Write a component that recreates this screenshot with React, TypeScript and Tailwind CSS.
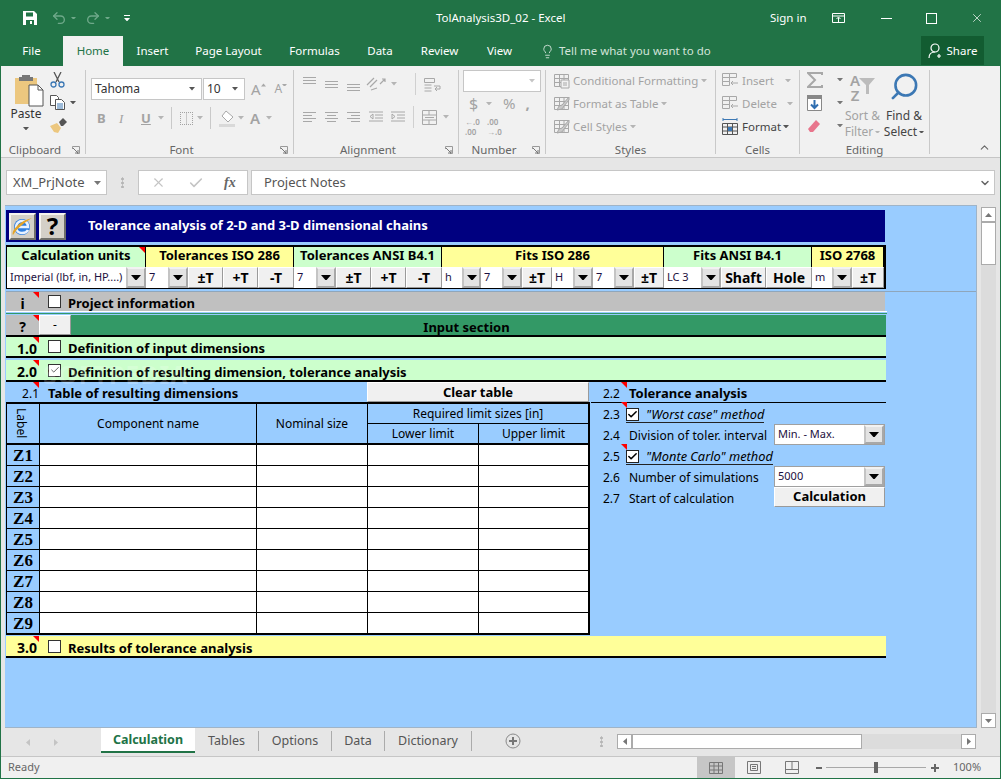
import { Lightbulb, Search, X, Check, ChevronUp, ChevronDown, Undo2, Redo2 } from "lucide-react";
import type { ReactNode } from "react";

const DIS = "#a8a8a8";

const Caret = ({ color = "#7a7a7a", w = 7 }: { color?: string; w?: number }) => (
  <svg width={w} height={(w * 4) / 7} viewBox="0 0 7 4" className="shrink-0">
    <path d="M0 0h7L3.5 4z" fill={color} />
  </svg>
);

const Launcher = () => (
  <svg width="8" height="8" viewBox="0 0 8 8" className="shrink-0">
    <path d="M.5 3V.5h7v7H5" fill="none" stroke="#9a9a9a" />
    <path d="M1 2l5 5M6 4v3H3" fill="none" stroke="#777" />
  </svg>
);

// horizontal text-align style lines
const Lines = ({ rows, color = DIS }: { rows: number[][]; color?: string }) => (
  <svg width="15" height="14" viewBox="0 0 15 14" className="shrink-0">
    {rows.map((r, i) => (
      <path key={i} d={`M${r[0]} ${r[2]}.5H${r[1]}`} stroke={color} />
    ))}
  </svg>
);

const CellGrid = () => (
  <svg width="17" height="16" viewBox="0 0 17 16" className="shrink-0">
    <path d="M.5.5h7v4h-7zM.5 4.5h7v4h-7zM.5 8.5h7v4h-7zM7.5.5h7v4h-7z" fill="none" stroke={DIS} />
    <path d="M9 10h7M11 8l-2 2 2 2" fill="none" stroke={DIS} />
  </svg>
);

const StyleIcon = ({ kind }: { kind: number }) => (
  <svg width="16" height="16" viewBox="0 0 16 16" className="shrink-0">
    <path d="M.5 1.5h14v12H.5zM.5 5.5h14M.5 9.5h14M5.5 1.5v12M10 1.5v12" fill="none" stroke={DIS} />
    {kind === 0 && <path d="M7 7h8v8H7z" fill="#f1f1f1" stroke={DIS} />}
    {kind === 0 && <path d="M9 10h4M9 12h4" stroke={DIS} />}
    {kind > 0 && <path d="M15 1L8 9l-3 1-2 4 5-1 2-3 5-6z" fill="#c9c9c9" stroke={DIS} />}
  </svg>
);

const Group = ({ w, label, launcher, children }: { w: number; label: string; launcher?: boolean; children: ReactNode }) => (
  <div className="flex flex-col h-[84px] border-r border-[#c9c9c9] shrink-0" style={{ width: w }}>
    <div className="h-[72px] flex shrink-0">{children}</div>
    <div className={`h-[14px] mt-px flex items-center justify-center relative text-[11.5px] text-[#666] shrink-0 ${launcher ? "pr-[16px]" : ""}`}>
      {label}
      {launcher && (
        <span className="absolute right-[5px] top-[3px]">
          <Launcher />
        </span>
      )}
    </div>
  </div>
);

const RibbonRow = ({ icon, label, dark, gap = 5 }: { icon: ReactNode; label: string; dark?: boolean; gap?: number }) => (
  <div className={`h-[23px] flex items-center ${dark ? "text-[#444]" : "text-[#a3a3a3]"}`}>
    {icon}
    <span className="ml-[3px] text-[11.5px] whitespace-nowrap">{label}</span>
    <span className="flex" style={{ marginLeft: gap }}>
      <Caret color={dark ? "#555" : "#b5b5b5"} w={6} />
    </span>
  </div>
);

const Clipboard = () => (
  <Group w={85} label="Clipboard" launcher>
    <div className="w-[49px] flex flex-col items-center pl-[7px] pt-[3px]">
      <svg width="30" height="34" viewBox="0 0 30 34" className="shrink-0">
        <path d="M1 5h22v26H1z" fill="#ecc77f" />
        <path d="M8 2h8v2h3v4H5V4h3z" fill="#777" />
        <path d="M15 12h9l5 5v16H15z" fill="#fff" stroke="#555" />
        <path d="M24 12v5h5" fill="none" stroke="#555" />
      </svg>
      <span className="text-[12px] text-[#333] leading-[14px] -ml-[6px]">Paste</span>
      <span className="mt-[6px] -ml-[6px]"><Caret color="#555" w={6} /></span>
    </div>
    <div className="flex flex-col -mt-[2px]">
      <div className="h-[23px] flex items-center">
        <svg width="15" height="16" viewBox="0 0 15 16">
          <path d="M4 0l5 10M11 0L6 10" fill="none" stroke="#555" strokeWidth="1.300" />
          <circle cx="3.500" cy="12.500" r="2.500" fill="none" stroke="#3c78b4" strokeWidth="1.300" />
          <circle cx="11.500" cy="12.500" r="2.500" fill="none" stroke="#3c78b4" strokeWidth="1.300" />
        </svg>
      </div>
      <div className="h-[23px] flex items-center">
        <svg width="16" height="15" viewBox="0 0 16 15">
          <path d="M.5.5h6l2 2v8h-8z" fill="#fff" stroke="#555" />
          <path d="M5.5 4.5h6l3 3v7h-9z" fill="#fff" stroke="#555" />
          <path d="M7 9h6M7 11h6M7 13h6" stroke="#3c78b4" />
        </svg>
        <span className="ml-[4px]"><Caret color="#555" w={6} /></span>
      </div>
      <div className="h-[23px] flex items-center">
        <svg width="17" height="15" viewBox="0 0 17 15">
          <path d="M0 8l7-3 4 5-3 5-4-1z" fill="#ecc77f" />
          <path d="M9 4l4-4 4 4-4 4-2 0z" fill="#555" />
        </svg>
      </div>
    </div>
  </Group>
);

const Combo = ({ w, value, h = 22 }: { w: number; value: string; h?: number }) => (
  <div className="bg-white border border-[#c6c6c6] flex items-center justify-between pl-[3px] pr-[6px] text-[#333] text-[12px]" style={{ width: w, height: h }}>
    <span>{value}</span>
    <Caret color="#555" w={6} />
  </div>
);

const FontGroup = () => (
  <Group w={208} label="Font" launcher>
    <div className="flex flex-col pl-[5px] pt-[8px]">
      <div className="flex items-center h-[22px]">
        <Combo w={111} value="Tahoma" />
        <div className="ml-[1px]"><Combo w={42} value="10" /></div>
        <span className="ml-[6px] text-[15px] text-[#a3a3a3] leading-none">A</span>
        <svg width="5" height="4" viewBox="0 0 7 4" className="mb-[8px]"><path d="M0 4h7L3.5 0z" fill={DIS} /></svg>
        <span className="ml-[9px] text-[12px] text-[#a3a3a3] leading-none">A</span>
        <span className="mb-[8px]"><Caret color={DIS} w={5} /></span>
      </div>
      <div className="flex items-center h-[22px] mt-[7px] text-[#a3a3a3]">
        <span className="ml-[6px] w-[11px] text-[13px] font-bold leading-none">B</span>
        <span className="ml-[11px] w-[11px] text-[13px] italic font-['Liberation_Serif'] leading-none">I</span>
        <span className="ml-[11px] w-[11px] text-[13px] font-bold underline leading-none">U</span>
        <span className="ml-[6px]"><Caret color="#b5b5b5" w={6} /></span>
        <span className="ml-[7px] w-px h-[22px] bg-[#c9c9c9]" />
        <span className="ml-[8px] size-[13px] border border-dotted border-[#a3a3a3] bg-[linear-gradient(#c8c8c8,#c8c8c8)] bg-[length:1px_100%] bg-center bg-no-repeat" />
        <span className="ml-[4px]"><Caret color="#b5b5b5" w={6} /></span>
        <span className="ml-[7px] w-px h-[22px] bg-[#c9c9c9]" />
        <svg width="16" height="17" viewBox="0 0 16 17" className="ml-[8px]">
          <path d="M7 1l7 6-5 5-6-6z" fill="#fff" stroke={DIS} />
          <path d="M0 14h16v3H0z" fill="#d9d9d9" />
        </svg>
        <span className="ml-[3px]"><Caret color="#b5b5b5" w={6} /></span>
        <span className="ml-[6px] text-[15px] font-semibold leading-none">A</span>
        <span className="ml-[6px]"><Caret color="#b5b5b5" w={6} /></span>
      </div>
    </div>
  </Group>
);

const AlignGroup = () => (
  <Group w={165} label="Alignment" launcher>
    <div className="flex flex-col pl-[8px] pt-[4px]">
      <div className="flex items-center gap-[7px] h-[20px]">
        <Lines rows={[[1, 14, 0], [1, 14, 3], [1, 14, 6]]} />
        <Lines rows={[[1, 14, 4], [1, 14, 7], [1, 14, 10]]} />
        <Lines rows={[[1, 14, 7], [1, 14, 10], [1, 14, 13]]} />
        <svg width="24" height="16" viewBox="0 0 24 16" className="-ml-[2px]">
          <path d="M1 9l7-7M4 11l7-7M5 14l6-2M14 8l5-5M16 3h3v3" fill="none" stroke={DIS} strokeWidth="1.2" />
        </svg>
        <span className="-ml-[6px]"><Caret color="#b5b5b5" w={6} /></span>
        <span className="ml-[11px] w-px h-[22px] bg-[#d0d0d0]" />
        <span className="ml-[1px] mt-[3px]">
          <svg width="17" height="16" viewBox="0 0 17 16">
            <path d="M.5.5h10v4H.5zM.5 7h7M.5 10h7M.5 13h7M10 8h6v3h-5M13 9l-2 2 2 2" fill="none" stroke={DIS} />
          </svg>
        </span>
      </div>
      <div className="flex items-center gap-[7px] h-[20px] mt-[13px]">
        <Lines rows={[[1, 14, 2], [1, 10, 5], [1, 14, 8], [1, 10, 11]]} />
        <Lines rows={[[1, 14, 2], [3, 12, 5], [1, 14, 8], [3, 12, 11]]} />
        <Lines rows={[[1, 14, 2], [5, 14, 5], [1, 14, 8], [5, 14, 11]]} />
        <svg width="15" height="14" viewBox="0 0 15 14"><path d="M1 2h14M7 5h8M7 8h8M1 11h14M5 4L2 6.5 5 9z" fill="none" stroke={DIS} /></svg>
        <svg width="15" height="14" viewBox="0 0 15 14"><path d="M1 2h14M7 5h8M7 8h8M1 11h14M2 4l3 2.5L2 9z" fill="none" stroke={DIS} /></svg>
        <span className="ml-[1px] w-px h-[22px] bg-[#d0d0d0]" />
        <svg width="15" height="15" viewBox="0 0 15 15" className="ml-[1px]"><path d="M.5.5h14v14H.5zM.5 5h14M.5 10h14M7 .5V5M7 10v4.500M3 7.5h9" fill="none" stroke={DIS} /></svg>
        <span className="-ml-[1px]"><Caret color="#b5b5b5" w={6} /></span>
      </div>
    </div>
  </Group>
);

const NumberGroup = () => (
  <Group w={87} label="Number" launcher>
    <div className="flex flex-col pl-[4px] text-[#a3a3a3]">
      <div className="w-[78px] h-[22px] bg-white border border-[#c6c6c6] flex items-center justify-end pr-[5px] shrink-0">
        <Caret color="#c5c5c5" w={6} />
      </div>
      <div className="flex items-center h-[23px] shrink-0">
        <span className="ml-[6px] w-[12px] text-[16px] leading-none">$</span>
        <span className="ml-[5px]"><Caret color="#b5b5b5" w={6} /></span>
        <span className="ml-[11px] text-[15px] leading-none">%</span>
        <span className="ml-[10px] text-[15px] font-bold leading-none">,</span>
      </div>
      <div className="flex items-center h-[23px] text-[8px] leading-[10px] font-semibold ml-[2px] shrink-0">
        <span className="w-[22px]">←.0<br />.00</span>
        <span>.00<br />→.0</span>
      </div>
    </div>
  </Group>
);

const StylesGroup = () => (
  <Group w={170} label="Styles">
    <div className="flex flex-col pl-[8px] -mt-px">
      <RibbonRow icon={<StyleIcon kind={0} />} label="Conditional Formatting" gap={3} />
      <RibbonRow icon={<StyleIcon kind={1} />} label="Format as Table" gap={3} />
      <RibbonRow icon={<StyleIcon kind={2} />} label="Cell Styles" gap={3} />
    </div>
  </Group>
);

const CellsGroup = () => (
  <Group w={84} label="Cells">
    <div className="flex flex-col pl-[6px] -mt-px">
      <RibbonRow icon={<CellGrid />} label="Insert" gap={11} />
      <RibbonRow icon={<CellGrid />} label="Delete" gap={10} />
      <RibbonRow
        dark
        gap={2}
        label="Format"
        icon={
          <svg width="17" height="17" viewBox="0 0 17 17" className="shrink-0">
            <path d="M1 1.5h14M1 0v3M15 0v3" stroke="#3c78b4" fill="none" />
            <path d="M.5 5.5h15v11H.5zM.5 9h15M.5 13h15M5.5 5.5v11M10.5 5.5v11" stroke="#555" fill="none" />
            <path d="M6 9h4v4H6z" fill="#3c78b4" />
          </svg>
        }
      />
    </div>
  </Group>
);

const EditingGroup = () => (
  <Group w={130} label="Editing">
    <div className="flex flex-col pl-[7px] -mt-[2px] w-[43px]">
      <div className="h-[23px] flex items-center justify-between">
        <svg width="16" height="16" viewBox="0 0 16 16"><path d="M15 3V1H1l7 7-7 7h14v-2" fill="none" stroke={DIS} strokeWidth="2" /></svg>
        <Caret color="#777" w={6} />
      </div>
      <div className="h-[23px] flex items-center justify-between">
        <svg width="15" height="16" viewBox="0 0 15 16">
          <path d="M.5.5h14v15H.5z" fill="#fff" stroke="#888" />
          <path d="M0 0h15v4H0z" fill="#888" />
          <path d="M7.5 5v8M4 9.5l3.5 3.5L11 9.5" fill="none" stroke="#2f6eb0" strokeWidth="2" />
        </svg>
        <Caret color="#777" w={6} />
      </div>
      <div className="h-[23px] flex items-center justify-between">
        <svg width="14" height="14" viewBox="0 0 14 14"><path d="M9 1l4 4-7 8H3L1 10z" fill="#e8758c" /></svg>
        <Caret color="#777" w={6} />
      </div>
    </div>
    <div className="flex flex-col items-center w-[37px] ml-[1px] pt-[3px] text-[#a3a3a3] text-[12px] leading-[16px]">
      <div className="h-[33px] flex">
        <span className="text-[15px] leading-[15px] font-semibold text-center">A<br />Z</span>
        <svg width="16" height="16" viewBox="0 0 16 16" className="mt-[5px] -ml-[1px]"><path d="M0 0h16L10 7v9H7V7z" fill="#bcbcbc" /></svg>
      </div>
      <span className="mt-[2px] whitespace-nowrap">Sort &amp;</span>
      <span className="flex items-center gap-[2px] whitespace-nowrap">Filter<Caret color="#b5b5b5" w={5} /></span>
    </div>
    <div className="flex flex-col items-center w-[40px] ml-[3px] pt-[3px] text-[#444] text-[12px] leading-[16px]">
      <div className="h-[33px]"><Search size={31} color="#3c78b4" strokeWidth={2} className="-scale-x-100 -mt-[2px]" /></div>
      <span className="mt-[2px] whitespace-nowrap">Find &amp;</span>
      <span className="flex items-center gap-[2px] whitespace-nowrap">Select<Caret color="#555" w={5} /></span>
    </div>
  </Group>
);

const Tri = () => <span className="absolute right-0 top-0 size-[6px] bg-[#ff0000] [clip-path:polygon(0_0,100%_0,100%_100%)]" />;

const raised = "border border-t-white border-l-white border-r-[#9a9a9a] border-b-[#9a9a9a] bg-[#f0f0f0]";

const Btn = ({ w, children, size = 14 }: { w: number; children: ReactNode; size?: number }) => (
  <div className={`${raised} h-full flex items-center justify-center font-bold shrink-0`} style={{ width: w, fontSize: size }}>
    {children}
  </div>
);

const Drop = ({ w, arrow = 20, value }: { w: number; arrow?: number; value: string }) => (
  <div className="flex bg-white shrink-0 h-full" style={{ width: w }}>
    <span className="flex-1 flex items-center pl-[3px] text-[11px] font-normal text-[#1c1040] whitespace-nowrap overflow-hidden">{value}</span>
    <span className="flex items-center justify-center bg-[#e3e3e3] border-2 border-t-[#f2f2f2] border-l-[#c4c4c4] border-r-[#a8a8a8] border-b-[#a8a8a8]" style={{ width: arrow }}>
      <Caret color="#000" w={10} />
    </span>
  </div>
);

const HeadCell = ({ w, yellow, label, tri }: { w: number; yellow?: boolean; label: string; tri?: boolean }) => (
  <div className={`relative h-full flex items-center justify-center pb-[2px] border-r border-black font-bold text-[13px] shrink-0 ${yellow ? "bg-[#ffff99]" : "bg-[#ccffcc]"}`} style={{ width: w }}>
    {label}
    {tri && <Tri />}
  </div>
);

const Box = ({ checked, small }: { checked?: boolean; small?: boolean }) => (
  <span className={`bg-white flex items-center justify-center shrink-0 border ${small ? "size-[13px] border-[#222]" : "size-[13px] border-[#333]"}`}>
    {checked && <Check size={small ? 11 : 10} strokeWidth={small ? 3.4 : 2} color={small ? "#000" : "#444"} />}
  </span>
);

const SectionRow = ({ num, label, bg, checked, mt, h = 21 }: { num: string; label: string; bg: string; checked?: boolean; mt?: number; h?: number }) => (
  <div className="w-[880px] flex items-center border-b-2 border-black shrink-0 font-bold text-[13px]" style={{ background: bg, marginTop: mt, height: h }}>
    <div className="relative w-[33px] h-full flex items-center justify-end pr-[2px] pt-[3px] text-[14px]">
      {num}
      <Tri />
    </div>
    <span className="ml-[9px]"><Box checked={checked} /></span>
    <span className="ml-[7px] pt-[5px]">{label}</span>
  </div>
);

const colHead = "flex items-center justify-center bg-[#99ccff] text-[12px] border-r border-black";
const rows = ["Z1", "Z2", "Z3", "Z4", "Z5", "Z6", "Z7", "Z8", "Z9"];

const DimTable = () => (
  <div className="w-[584px] border-2 border-l border-black grid grid-cols-[33px_217px_111px_111px_109px] grid-rows-[20px_21px_repeat(8,21px)_20px] text-black">
    <div className={`${colHead} row-span-2 border-b-2 pr-[4px]`}>
      <span className="[writing-mode:vertical-rl]">Label</span>
    </div>
    <div className={`${colHead} row-span-2 border-b-2`}>Component name</div>
    <div className={`${colHead} row-span-2 border-b-2`}>Nominal size</div>
    <div className={`${colHead} col-span-2 border-b !border-r-0`}>Required limit sizes [in]</div>
    <div className={`${colHead} border-b-2`}>Lower limit</div>
    <div className={`${colHead} border-b-2 !border-r-0`}>Upper limit</div>
    {rows.map((z, i) => (
      <div key={z} className="contents">
        <div className={`flex items-center justify-center pt-px bg-[#99ccff] border-r border-black font-['Liberation_Serif'] font-bold text-[17px] ${i < 8 ? "border-b" : ""}`}>{z}</div>
        <div className={`bg-white border-r border-black ${i < 8 ? "border-b" : ""}`} />
        <div className={`bg-white border-r border-black ${i < 8 ? "border-b" : ""}`} />
        <div className={`bg-white border-r border-black ${i < 8 ? "border-b" : ""}`} />
        <div className={`bg-white ${i < 8 ? "border-b border-black" : ""}`} />
      </div>
    ))}
  </div>
);

const AnalysisRow = ({ num, children, tri }: { num: string; children: ReactNode; tri?: boolean }) => (
  <div className="h-[21px] flex items-center shrink-0 text-[12px]">
    <span className="relative w-[26px] ml-[12px] h-full flex items-center pt-[3px] shrink-0">
      {num}
      {tri && <span className="absolute -top-px right-[2px] size-[6px] bg-[#ff0000] [clip-path:polygon(0_0,100%_0,100%_100%)]" />}
    </span>
    {children}
  </div>
);

const Method = ({ label }: { label: string }) => (
  <span className="flex items-center italic -ml-[3px] border-b border-[#222] text-[12.800px] leading-[15px] mt-[2px]">
    <Box checked small />
    <span className="ml-[7px] whitespace-nowrap">{label}</span>
  </span>
);

const AnalysisPanel = () => (
  <div className="w-[295px] flex flex-col">
    <div className="h-[21px] flex items-center border-b border-black text-[13px] shrink-0">
      <span className="relative w-[26px] ml-[12px] h-full flex items-center pt-[3px] font-normal text-[12px] shrink-0">
        2.2
        <span className="absolute top-0 right-[2px] size-[6px] bg-[#ff0000] [clip-path:polygon(0_0,100%_0,100%_100%)]" />
      </span>
      <span className="font-bold pt-[3px]">Tolerance analysis</span>
    </div>
    <AnalysisRow num="2.3" tri><Method label={'"Worst case" method'} /></AnalysisRow>
    <AnalysisRow num="2.4">
      <span className="w-[145px] whitespace-nowrap tracking-[0.1px] pt-[3px]">Division of toler. interval</span>
      <div className="border border-[#a0a0a0] h-full flex"><Drop w={109} value="Min. - Max." arrow={20} /></div>
    </AnalysisRow>
    <AnalysisRow num="2.5" tri><Method label={'"Monte Carlo" method'} /></AnalysisRow>
    <AnalysisRow num="2.6">
      <span className="w-[145px] whitespace-nowrap pt-[3px]">Number of simulations</span>
      <div className="border border-[#a0a0a0] h-full flex"><Drop w={109} value="5000" arrow={20} /></div>
    </AnalysisRow>
    <div className="h-[21px] flex items-start shrink-0 text-[12px]">
      <span className="w-[26px] ml-[12px] h-[21px] flex items-center pt-[3px] shrink-0">2.7</span>
      <span className="w-[145px] h-[21px] flex items-center pt-[3px] whitespace-nowrap">Start of calculation</span>
      <div className="h-[20px]"><Btn w={111} size={13}>Calculation</Btn></div>
    </div>
  </div>
);

const Sheet = () => (
  <div className="relative flex-1 min-w-0 bg-[#99ccff] border border-[#9fb4c8] border-l-0 flex flex-col pl-px pt-[4px] font-['Noto_Sans',sans-serif] text-black overflow-hidden">
    {/* title bar */}
    <div className="w-[879px] h-[32px] bg-[#000080] flex items-center shrink-0 text-white">
      <div className="ml-[3px] size-[27px] border-2 border-t-[#f5f3ee] border-l-[#f5f3ee] border-r-[#6f6f6a] border-b-[#6f6f6a] bg-[#d4d0c8] flex items-center justify-center">
        <svg width="23" height="23" viewBox="0 0 23 23">
          <circle cx="11" cy="12" r="8" fill="#2f7fe0" />
          <path d="M5 12h12c0-4-2.500-6-6-6s-6 3-6 6c0 4 3 6 6 6 3 0 5-1 6-3" fill="none" stroke="#e8f2ff" strokeWidth="2.500" />
          <path d="M2 20c-2-4 6-14 19-17-5 3-15 10-19 17z" fill="#e4a428" />
        </svg>
      </div>
      <div className="ml-[3px] size-[27px] border-2 border-t-[#f5f3ee] border-l-[#f5f3ee] border-r-[#6f6f6a] border-b-[#6f6f6a] bg-[#d4d0c8] flex items-center justify-center text-black font-bold text-[24px] leading-none">?</div>
      <span className="ml-[22px] font-bold text-[13px]">Tolerance analysis of 2-D and 3-D dimensional chains</span>
    </div>

    {/* tolerance toolbar */}
    <div className="w-[880px] h-[44px] mt-[3px] border-t-2 border-r-2 border-b border-l border-black shrink-0 flex flex-col">
      <div className="h-[20px] flex">
        <HeadCell w={139} label="Calculation units" tri />
        <HeadCell w={148} yellow label="Tolerances ISO 286" />
        <HeadCell w={148} label="Tolerances ANSI B4.1" />
        <HeadCell w={222} yellow label="Fits ISO 286" />
        <HeadCell w={148} label="Fits ANSI B4.1" />
        <HeadCell w={72} yellow label="ISO 2768" />
      </div>
      <div className="h-[21px] flex">
        <Drop w={139} value="Imperial (lbf, in, HP....)" />
        <Drop w={42} value="7" /><Btn w={35}>±T</Btn><Btn w={35}>+T</Btn><Btn w={36}>-T</Btn>
        <Drop w={42} value="7" /><Btn w={35}>±T</Btn><Btn w={35}>+T</Btn><Btn w={36}>-T</Btn>
        <Drop w={39} value="h" arrow={19} /><Drop w={41} value="7" /><Btn w={30}>±T</Btn>
        <Drop w={41} value="H" /><Drop w={41} value="7" /><Btn w={30}>±T</Btn>
        <Drop w={57} value="LC 3" /><Btn w={45}>Shaft</Btn><Btn w={46}>Hole</Btn>
        <Drop w={40} value="m" /><Btn w={32}>±T</Btn>
      </div>
    </div>

    <div className="w-[972px] h-px bg-[#8fa6bb] mt-[2px] shrink-0" />

    {/* i row */}
    <div className="w-[879px] h-[19px] bg-[#c0c0c0] flex items-center font-bold text-[13px] shrink-0">
      <div className="relative w-[33px] h-full flex items-center justify-center pt-[3px] text-[14px]">i<Tri /></div>
      <span className="ml-[9px]"><Box /></span>
      <span className="ml-[7px] pt-[5px]">Project information</span>
    </div>
    <div className="w-[881px] h-px bg-white shrink-0" />
    <div className="w-[881px] h-px bg-[#339966] mt-px shrink-0" />

    {/* input section */}
    <div className="w-[880px] h-[22px] mt-px bg-[#339966] border-b-2 border-black flex shrink-0 font-bold text-[13px]">
      <div className="relative w-[33px] h-full bg-[#c0c0c0] flex items-center justify-center pt-[3px] text-[14px]">?<Tri /></div>
      <div className={`${raised} w-[32px] h-full flex items-center justify-center font-normal text-[12px]`}>-</div>
      <div className="flex-1 flex items-center justify-center pr-[24px] pt-[5px]">Input section</div>
    </div>
    <SectionRow num="1.0" label="Definition of input dimensions" bg="#ccffcc" />
    <SectionRow num="2.0" label="Definition of resulting dimension, tolerance analysis" bg="#ccffcc" checked mt={2} h={22} />

    {/* table + analysis */}
    <div className="w-[880px] flex shrink-0">
      <div className="w-[585px] flex flex-col shrink-0">
        <div className="h-[20px] flex items-center shrink-0">
          <div className="relative w-[33px] h-full flex items-center justify-end text-[12px] pt-[3px]">
            2.1
            <Tri />
          </div>
          <span className="ml-[9px] pt-[3px] font-bold text-[13px] w-[319px] whitespace-nowrap">Table of resulting dimensions</span>
          <div className={`${raised} w-[222px] h-full flex items-center justify-center pt-px font-bold text-[13px]`}>Clear table</div>
        </div>
        <DimTable />
      </div>
      <AnalysisPanel />
    </div>

    <SectionRow num="3.0" label="Results of tolerance analysis" bg="#ffff99" mt={1} h={22} />

    {/* watermark */}
    <span className="absolute left-[38px] top-[150px] text-[25px] font-bold tracking-[1px] text-white/20 pointer-events-none">SOFTPEDIA</span>
  </div>
);

const VScroll = () => (
  <div className="w-[23px] pl-[4px] pr-[4px] pt-[2px] flex flex-col shrink-0">
    <div className="h-[15px] bg-white border border-[#ababab] flex items-center justify-center">
      <svg width="7" height="4" viewBox="0 0 7 4"><path d="M0 4h7L3.500 0z" fill="#777" /></svg>
    </div>
    <div className="flex-1 bg-[#dcdcdc] flex flex-col">
      <div className="h-[43px] bg-white border border-[#ababab]" />
    </div>
    <div className="h-[15px] bg-white border border-[#ababab] flex items-center justify-center">
      <Caret color="#777" />
    </div>
  </div>
);

const tabs = [
  { label: "Tables", w: 64 },
  { label: "Options", w: 73 },
  { label: "Data", w: 53 },
  { label: "Dictionary", w: 87 },
];

const SheetTabs = () => (
  <div className="h-[28px] bg-[#e6e6e6] flex shrink-0 font-['Noto_Sans',sans-serif] text-[12.500px] text-[#555]">
    <div className="w-[100px] flex items-center pl-[25px] gap-[24px] shrink-0">
      <svg width="4" height="7" viewBox="0 0 4 7"><path d="M4 0v7L0 3.500z" fill="#c4c4c4" /></svg>
      <svg width="4" height="7" viewBox="0 0 4 7"><path d="M0 0v7l4-3.500z" fill="#c4c4c4" /></svg>
    </div>
    <div className="w-[94px] h-[26px] bg-white border-b-2 border-[#217346] -mt-px pt-[2px] flex items-center justify-center font-bold text-[#217346] shrink-0">Calculation</div>
    {tabs.map((t) => (
      <div key={t.label} className="h-[20px] mt-[3px] pt-px flex items-center justify-center border-r border-[#ababab] shrink-0" style={{ width: t.w }}>{t.label}</div>
    ))}
    <svg width="16" height="16" viewBox="0 0 16 16" className="ml-[33px] mt-[5px] shrink-0">
      <circle cx="8" cy="8" r="7" fill="none" stroke="#8a8a8a" />
      <path d="M4 8h8M8 4v8" stroke="#777" strokeWidth="2" />
    </svg>
    <div className="ml-[79px] mt-[8px] w-[3px] h-[11px] bg-[radial-gradient(#b5b5b5_1px,transparent_1.500px)] bg-[length:3px_4px] shrink-0" />
    <div className="ml-[14px] mt-[6px] w-[359px] h-[15px] flex bg-[#dcdcdc] shrink-0">
      <div className="w-[15px] bg-white border border-[#ababab] flex items-center justify-center">
        <svg width="4" height="7" viewBox="0 0 4 7"><path d="M4 0v7L0 3.500z" fill="#777" /></svg>
      </div>
      <div className="w-[230px] bg-white border border-[#ababab]" />
      <div className="flex-1" />
      <div className="w-[15px] bg-white border border-[#ababab] flex items-center justify-center">
        <svg width="4" height="7" viewBox="0 0 4 7"><path d="M0 0v7l4-3.500z" fill="#777" /></svg>
      </div>
    </div>
  </div>
);

const StatusBar = () => (
  <div className="h-[22px] bg-[#f0f0f0] border-t border-[#c6c6c6] flex items-center text-[11px] text-[#666] font-['Noto_Sans',sans-serif] shrink-0">
    <span className="ml-[7px] w-[689px]">Ready</span>
    <div className="w-[38px] h-full bg-[#c6c6c6] flex items-center justify-center shrink-0">
      <svg width="14" height="12" viewBox="0 0 14 12"><path d="M.5.5h13v11H.5zM.5 4h13M.5 8h13M5 .5v11M9.500.5v11" fill="none" stroke="#777" /></svg>
    </div>
    <svg width="14" height="13" viewBox="0 0 14 13" className="ml-[12px] shrink-0"><path d="M.5.5h13v12H.5zM3.500 3.500h7v6h-7zM5 5.500h4M5 7.500h4" fill="none" stroke="#777" /></svg>
    <svg width="14" height="13" viewBox="0 0 14 13" className="ml-[24px] shrink-0"><path d="M.5.5h13v12H.5zM.5 8.500h13M7 .5v8" fill="none" stroke="#777" /></svg>
    <span className="ml-[17px] w-[6px] h-[2px] bg-[#666] shrink-0" />
    <div className="ml-[4px] w-[100px] h-px bg-[#a8a8a8] relative shrink-0">
      <span className="absolute left-[48px] -top-[5px] w-[4px] h-[11px] bg-[#666]" />
    </div>
    <svg width="8" height="8" viewBox="0 0 8 8" className="ml-[5px] shrink-0"><path d="M0 4h8M4 0v8" stroke="#666" strokeWidth="2" /></svg>
    <span className="ml-[14px]">100%</span>
  </div>
);

const App = () => {
  return (
    <div className="w-[1001px] h-[779px] bg-[#e6e6e6] border-x border-b border-[#217346] flex flex-col overflow-hidden font-['Noto_Sans',sans-serif]">
      {/* title bar */}
      <div className="h-[36px] -mx-px bg-[#217346] flex items-center text-white text-[11.500px] shrink-0">
        <div className="w-[436px] flex items-center pl-[23px] shrink-0">
          <svg width="14" height="14" viewBox="0 0 14 14"><path d="M0 0h11l3 3v11H0z" fill="#fff" /><path d="M3 1.500h7v4H3zM3 9h8v5H3z" fill="#217346" /><path d="M7 10h2v3H7z" fill="#fff" /></svg>
          <Undo2 size={16} color="#6fa98a" className="ml-[14px]" />
          <span className="ml-[4px]"><Caret color="#6fa98a" w={5} /></span>
          <Redo2 size={16} color="#6fa98a" className="ml-[9px]" />
          <span className="ml-[4px]"><Caret color="#6fa98a" w={5} /></span>
          <span className="ml-[14px] flex flex-col items-center gap-[2px]">
            <span className="w-[6px] h-px bg-white" />
            <Caret color="#fff" w={6} />
          </span>
        </div>
        <span className="w-[334px] shrink-0">TolAnalysis3D_02 - Excel</span>
        <span className="w-[62px] shrink-0">Sign in</span>
        <svg width="14" height="11" viewBox="0 0 14 11" className="shrink-0"><path d="M.5.5h12v9H.5zM.5 3h12M6.500 9V4.500M4.500 6l2-2 2 2" fill="none" stroke="#fff" /></svg>
        <span className="ml-[35px] w-[11px] h-px bg-white shrink-0" />
        <span className="ml-[34px] size-[11px] border border-white shrink-0" />
        <X size={14} color="#fff" strokeWidth={1.200} className="ml-[33px] shrink-0" />
      </div>

      {/* tabs */}
      <div className="h-[30px] -mx-px bg-[#217346] flex items-end text-white text-[11.500px] shrink-0">
        <span className="w-[63px] h-full flex items-center justify-center">File</span>
        <span className="w-[60px] h-full flex items-center justify-center bg-[#f1f1f1] text-[#217346]">Home</span>
        {[["Insert", 59], ["Page Layout", 93], ["Formulas", 79], ["Data", 52], ["Review", 67], ["View", 53]].map(([t, w]) => (
          <span key={t} className="h-full flex items-center justify-center" style={{ width: w }}>{t}</span>
        ))}
        <span className="h-full flex items-center ml-[14px] w-[381px] text-[#d2e4da]">
          <Lightbulb size={15} strokeWidth={1.300} color="#e4efe9" className="mr-[4px]" />
          Tell me what you want to do
        </span>
        <span className="w-[63px] h-[29px] mb-px bg-[#125c31] flex items-center justify-center gap-[3px]">
          <svg width="16" height="16" viewBox="0 0 16 16"><circle cx="7" cy="5" r="4" fill="none" stroke="#fff" strokeWidth="1.200" /><path d="M1 15c0-4 2-6 6-6M11 11v4M9 13h4" fill="none" stroke="#fff" strokeWidth="1.200" /></svg>
          Share
        </span>
      </div>

      {/* ribbon */}
      <div className="h-[92px] bg-[#f1f1f1] border-b border-[#c6c6c6] flex items-start pt-[4px] relative shrink-0">
        <Clipboard />
        <FontGroup />
        <AlignGroup />
        <NumberGroup />
        <StylesGroup />
        <CellsGroup />
        <EditingGroup />
        <ChevronUp size={13} color="#666" strokeWidth={2} className="absolute right-[9px] bottom-[3px]" />
      </div>

      {/* formula bar */}
      <div className="h-[47px] flex items-center pt-[2px] pl-[5px] text-[12px] text-[#444] shrink-0">
        <div className="w-[101px] h-[25px] bg-white border border-[#c6c6c6] flex items-center justify-between pl-[6px] pr-[5px] text-[#555] text-[13px]">
          XM_PrjNote
          <Caret color="#777" />
        </div>
        <div className="w-[31px] flex justify-center">
          <span className="w-[3px] h-[11px] bg-[radial-gradient(#b5b5b5_1px,transparent_1.500px)] bg-[length:3px_4px]" />
        </div>
        <div className="w-[110px] h-[25px] bg-white border border-[#c6c6c6] flex items-center pl-[12px]">
          <X size={15} color="#c4c4c4" strokeWidth={1.800} />
          <Check size={16} color="#c4c4c4" strokeWidth={2.400} className="ml-[22px]" />
          <span className="ml-[20px] font-['Liberation_Serif'] italic font-bold text-[14px] text-[#666]">fx</span>
        </div>
        <div className="ml-[3px] w-[744px] h-[25px] bg-white border border-[#c6c6c6] flex items-center justify-between pl-[12px] pr-[3px] text-[13px] text-[#555]">
          Project Notes
          <ChevronDown size={12} strokeWidth={3} color="#666" />
        </div>
      </div>

      {/* sheet */}
      <div className="flex-1 min-h-0 flex pl-[4px]">
        <Sheet />
        <VScroll />
      </div>

      <SheetTabs />
      <StatusBar />
    </div>
  );
};

export default App;
